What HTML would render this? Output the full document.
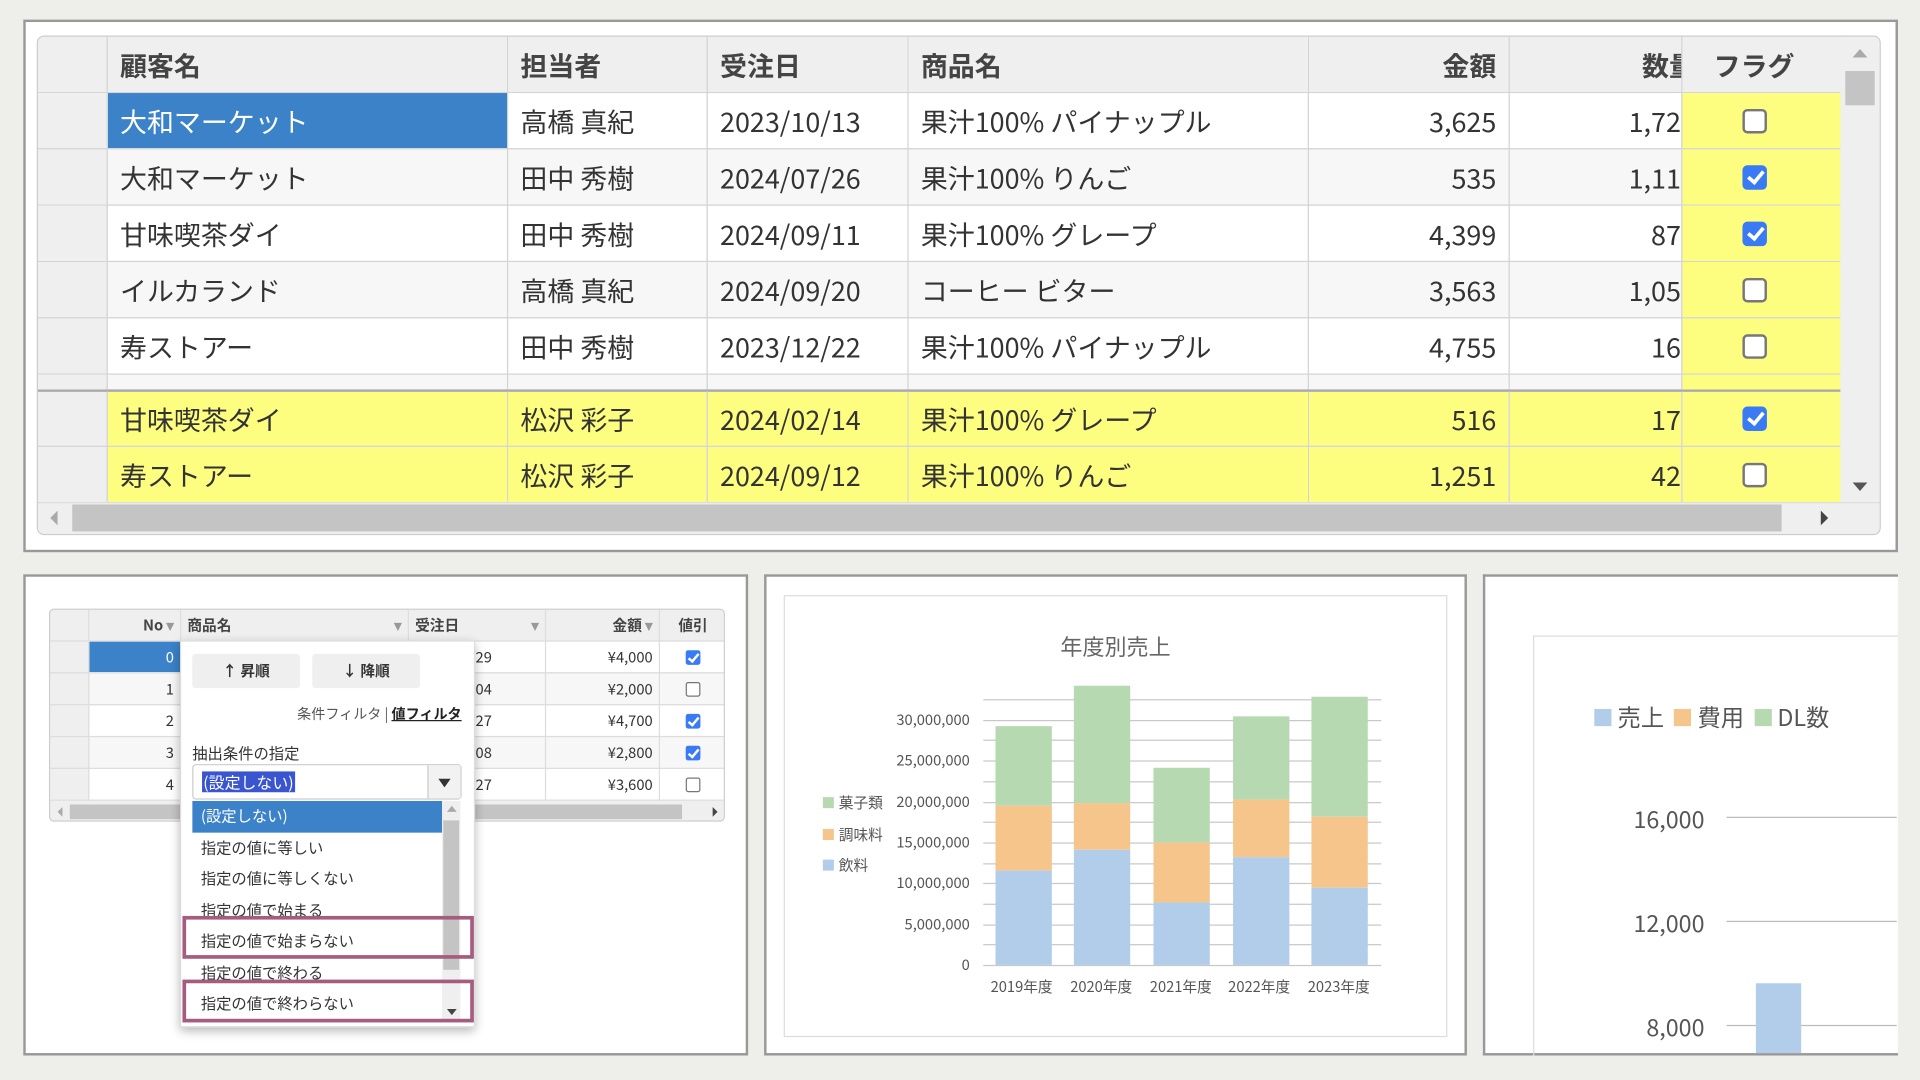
<!DOCTYPE html>
<html><head><meta charset="utf-8">
<style>
*{box-sizing:border-box;margin:0;padding:0}
body{width:1920px;height:1080px;overflow:hidden;background:#eeeeeb;font-family:"Noto Sans CJK JP","Liberation Sans",sans-serif;color:#333}
#s{position:absolute;left:0;top:0;width:1568px;height:882px;transform:scale(1.22449);transform-origin:0 0}
.a{position:absolute}
.panel{position:absolute;background:#fff;border:2px solid #999}
table{border-collapse:collapse;table-layout:fixed}
.tg td{border:1px solid #d4d4d4;height:46px;font-size:22px;line-height:26px;padding:0 10px;white-space:nowrap;overflow:hidden;position:relative}
.tg tr.h td{background:#efefef;font-weight:700;color:#444}
.tg td.rh{background:#efefef}
.tg tr.p td{height:13px;font-size:0;line-height:0;padding:0}
.r{text-align:right}
.y{background:#fdfd80}
.cut span{position:absolute;right:-12px;top:50%;transform:translateY(-50%)}
.cc{text-align:center;padding-right:22px!important}
.cb{display:inline-block;width:20px;height:20px;border:2px solid #777;border-radius:4px;background:#fff;vertical-align:middle;position:relative;top:-3px}
.cb.on{background:#3a7bf5;border-color:#3a7bf5}
.cb.on:after{content:"";position:absolute;left:5px;top:0px;width:5px;height:10px;border:solid #fff;border-width:0 3px 3px 0;transform:rotate(40deg)}
.sg td{border:1px solid #ddd;height:26px;font-size:12px;line-height:14px;padding:0 5px;white-space:nowrap;overflow:hidden}
.sg tr.h td{background:#efefef;font-weight:700;color:#444}
.scb{display:inline-block;width:12px;height:12px;border:1px solid #777;border-radius:2px;background:#fff;vertical-align:middle;position:relative}
.scb.on{background:#3a7bf5;border-color:#3a7bf5}
.scb.on:after{content:"";position:absolute;left:3px;top:0;width:3px;height:7px;border:solid #fff;border-width:0 2px 2px 0;transform:rotate(40deg)}
.li{position:absolute;left:0;width:204px;height:25.5px;font-size:12.5px;line-height:24px;padding-left:7px}
.yl{position:absolute;font-size:12px;color:#555;text-align:right;width:90px}
.gl{position:absolute;height:1px;background:#c8c8c8}
.bar{position:absolute;width:46px}
</style></head><body><div id="s">

<div class="panel" style="left:19px;top:16px;width:1531px;height:435px"></div>
<div class="a" style="left:30px;top:29px;width:1506px;height:408px;border:1px solid #ccc;border-radius:6px;background:#efefef;overflow:hidden">
<table class="tg" style="position:absolute;left:-1px;top:-1px;width:1473px">
<colgroup><col style="width:57px"><col style="width:327px"><col style="width:163px"><col style="width:164px"><col style="width:327px"><col style="width:164px"><col style="width:141px"><col style="width:130px"></colgroup>
<tr class="h"><td></td><td>顧客名</td><td>担当者</td><td>受注日</td><td>商品名</td><td class="r">金額</td><td class="cut"><span>数量</span></td><td class="cc">フラグ</td></tr>
<tr style="background:#fff"><td class="rh"></td><td style="background:#3b82c8;color:#fff">大和マーケット</td><td>高橋 真紀</td><td>2023/10/13</td><td>果汁100% パイナップル</td><td class="r">3,625</td><td class="cut"><span>1,720</span></td><td class="y cc"><i class="cb"></i></td></tr>
<tr style="background:#f7f7f7"><td class="rh"></td><td>大和マーケット</td><td>田中 秀樹</td><td>2024/07/26</td><td>果汁100% りんご</td><td class="r">535</td><td class="cut"><span>1,110</span></td><td class="y cc"><i class="cb on"></i></td></tr>
<tr style="background:#fff"><td class="rh"></td><td>甘味喫茶ダイ</td><td>田中 秀樹</td><td>2024/09/11</td><td>果汁100% グレープ</td><td class="r">4,399</td><td class="cut"><span>870</span></td><td class="y cc"><i class="cb on"></i></td></tr>
<tr style="background:#f7f7f7"><td class="rh"></td><td>イルカランド</td><td>高橋 真紀</td><td>2024/09/20</td><td>コーヒー ビター</td><td class="r">3,563</td><td class="cut"><span>1,050</span></td><td class="y cc"><i class="cb"></i></td></tr>
<tr style="background:#fff"><td class="rh"></td><td>寿ストアー</td><td>田中 秀樹</td><td>2023/12/22</td><td>果汁100% パイナップル</td><td class="r">4,755</td><td class="cut"><span>160</span></td><td class="y cc"><i class="cb"></i></td></tr>
<tr class="p" style="background:#f7f7f7"><td class="rh"></td><td></td><td></td><td></td><td></td><td></td><td></td><td class="y"></td></tr>
<tr><td class="rh" style="border-top:2px solid #aaa;height:45px"></td><td class="y" style="border-top:2px solid #aaa">甘味喫茶ダイ</td><td class="y" style="border-top:2px solid #aaa">松沢 彩子</td><td class="y" style="border-top:2px solid #aaa">2024/02/14</td><td class="y" style="border-top:2px solid #aaa">果汁100% グレープ</td><td class="y r" style="border-top:2px solid #aaa">516</td><td class="y cut" style="border-top:2px solid #aaa"><span>170</span></td><td class="y cc" style="border-top:2px solid #aaa"><i class="cb on"></i></td></tr>
<tr><td class="rh" style="height:45px"></td><td class="y">寿ストアー</td><td class="y">松沢 彩子</td><td class="y">2024/09/12</td><td class="y">果汁100% りんご</td><td class="y r">1,251</td><td class="y cut"><span>420</span></td><td class="y cc"><i class="cb"></i></td></tr>
</table>
<div class="a" style="left:1472px;top:0;width:33px;height:380px;background:#efefef"></div>
<div class="a" style="left:1482px;top:10px;width:0;height:0;border:6px solid transparent;border-bottom:7px solid #aaa;border-top:0"></div>
<div class="a" style="left:1476px;top:28px;width:24px;height:28px;background:#c4c4c4"></div>
<div class="a" style="left:1482px;top:364px;width:0;height:0;border:6px solid transparent;border-top:7px solid #555;border-bottom:0"></div>
<div class="a" style="left:0;top:380px;width:1506px;height:28px;background:#efefef;border-top:1px solid #ddd"></div>
<div class="a" style="left:28px;top:382px;width:1396px;height:22px;background:#c4c4c4"></div>
<div class="a" style="left:10px;top:387px;border:6px solid transparent;border-right:6px solid #aaa;border-left:0"></div>
<div class="a" style="left:1456px;top:387px;border:6px solid transparent;border-left:6px solid #444;border-right:0"></div>
</div>

<div class="panel" style="left:19px;top:469px;width:592px;height:393px"></div>
<div class="a" style="left:40px;top:497px;width:552px;height:174px;border:1px solid #ccc;border-radius:4px;background:#efefef;overflow:hidden">
<table class="sg" style="position:absolute;left:-1px;top:-1px;width:553px">
<colgroup><col style="width:32px"><col style="width:75px"><col style="width:186px"><col style="width:112px"><col style="width:93px"><col style="width:55px"></colgroup>
<tr class="h"><td></td><td class="r">No <span style="color:#999">▾</span></td><td>商品名<span style="float:right;color:#999">▾</span></td><td>受注日<span style="float:right;color:#999">▾</span></td><td class="r">金額 <span style="color:#999">▾</span></td><td style="text-align:center">値引</td></tr>
<tr style="background:#fff"><td style="background:#efefef"></td><td class="r" style="background:#3b82c8;color:#fff">0</td><td></td><td>2023/01/29</td><td class="r">¥4,000</td><td style="text-align:center"><i class="scb on"></i></td></tr>
<tr style="background:#f7f7f7"><td style="background:#efefef"></td><td class="r">1</td><td></td><td>2023/02/04</td><td class="r">¥2,000</td><td style="text-align:center"><i class="scb"></i></td></tr>
<tr style="background:#fff"><td style="background:#efefef"></td><td class="r">2</td><td></td><td>2023/03/27</td><td class="r">¥4,700</td><td style="text-align:center"><i class="scb on"></i></td></tr>
<tr style="background:#f7f7f7"><td style="background:#efefef"></td><td class="r">3</td><td></td><td>2023/04/08</td><td class="r">¥2,800</td><td style="text-align:center"><i class="scb on"></i></td></tr>
<tr style="background:#fff"><td style="background:#efefef"></td><td class="r">4</td><td></td><td>2023/05/27</td><td class="r">¥3,600</td><td style="text-align:center"><i class="scb"></i></td></tr>
</table>
<div class="a" style="left:0;top:156px;width:552px;height:18px;background:#efefef"></div>
<div class="a" style="left:16px;top:159px;width:500px;height:12px;background:#c4c4c4"></div>
<div class="a" style="left:6px;top:161px;border:4px solid transparent;border-right:4px solid #aaa;border-left:0"></div>
<div class="a" style="left:541px;top:161px;border:4px solid transparent;border-left:4px solid #444;border-right:0"></div>
</div>
<div class="a" style="left:147px;top:523px;width:241px;height:316px;background:#fff;box-shadow:0 3px 8px rgba(0,0,0,.3);border:1px solid #ddd">
<div class="a" style="left:9px;top:10px;width:88px;height:28px;background:#efefef;border-radius:3px;font-size:12px;font-weight:700;text-align:center;line-height:28px">↑ 昇順</div>
<div class="a" style="left:107px;top:10px;width:88px;height:28px;background:#efefef;border-radius:3px;font-size:12px;font-weight:700;text-align:center;line-height:28px">↓ 降順</div>
<div class="a" style="right:10px;top:51px;font-size:11.5px;color:#555">条件フィルタ | <span style="color:#222;text-decoration:underline;font-weight:700">値フィルタ</span></div>
<div class="a" style="left:9px;top:81px;font-size:12.5px">抽出条件の指定</div>
<div class="a" style="left:9px;top:100px;width:220px;height:29px;border:1px solid #ccc;border-radius:3px;background:#fff">
<span class="a" style="left:7px;top:5px;background:#3a55d0;color:#fff;font-size:13px;line-height:17px;padding:0 1px">(設定しない)</span>
<div class="a" style="right:0;top:0;width:27px;height:27px;border-left:1px solid #ccc;background:#f2f2f2"></div>
<div class="a" style="right:8px;top:11px;border:5px solid transparent;border-top:7px solid #333;border-bottom:0"></div>
</div>
<div class="a" style="left:9px;top:130px;width:222px;height:181px;background:#fff;overflow:hidden">
<div class="li" style="top:0;background:#3b82c8;color:#fff">(設定しない)</div>
<div class="li" style="top:25.5px">指定の値に等しい</div>
<div class="li" style="top:51px">指定の値に等しくない</div>
<div class="li" style="top:76.5px">指定の値で始まる</div>
<div class="li" style="top:102px">指定の値で始まらない</div>
<div class="li" style="top:127.5px">指定の値で終わる</div>
<div class="li" style="top:153px">指定の値で終わらない</div>
<div class="a" style="left:204px;top:0;width:15px;height:181px;background:#efefef"></div>
<div class="a" style="left:205px;top:16px;width:13px;height:122px;background:#c4c4c4"></div>
<div class="a" style="left:208px;top:4px;border:4px solid transparent;border-bottom:5px solid #aaa;border-top:0"></div>
<div class="a" style="left:208px;top:170px;border:4px solid transparent;border-top:5px solid #444;border-bottom:0"></div>
</div>
</div>
<div class="a" style="left:149px;top:748px;width:238px;height:35px;border:3px solid #a55c7e"></div>
<div class="a" style="left:149px;top:800px;width:238px;height:35px;border:3px solid #a55c7e"></div>

<div class="panel" style="left:624px;top:469px;width:574px;height:393px"></div>
<div class="a" style="left:640px;top:486px;width:542px;height:361px;border:1px solid #ddd"></div>
<div class="a" style="left:811px;top:515px;width:200px;text-align:center;font-size:18px;color:#666">年度別売上</div>
<div class="gl" style="left:803px;top:571px;width:325px"></div>
<div class="gl" style="left:803px;top:588px;width:325px"></div>
<div class="gl" style="left:803px;top:604px;width:325px"></div>
<div class="gl" style="left:803px;top:621px;width:325px"></div>
<div class="gl" style="left:803px;top:638px;width:325px"></div>
<div class="gl" style="left:803px;top:655px;width:325px"></div>
<div class="gl" style="left:803px;top:671px;width:325px"></div>
<div class="gl" style="left:803px;top:688px;width:325px"></div>
<div class="gl" style="left:803px;top:705px;width:325px"></div>
<div class="gl" style="left:803px;top:721px;width:325px"></div>
<div class="gl" style="left:803px;top:738px;width:325px"></div>
<div class="gl" style="left:803px;top:755px;width:325px"></div>
<div class="gl" style="left:803px;top:771px;width:325px"></div>
<div class="gl" style="left:803px;top:788px;width:325px"></div>
<div class="yl" style="left:702px;top:579px">30,000,000</div>
<div class="yl" style="left:702px;top:612px">25,000,000</div>
<div class="yl" style="left:702px;top:646px">20,000,000</div>
<div class="yl" style="left:702px;top:679px">15,000,000</div>
<div class="yl" style="left:702px;top:712px">10,000,000</div>
<div class="yl" style="left:702px;top:746px">5,000,000</div>
<div class="yl" style="left:702px;top:779px">0</div>
<div class="bar" style="left:813px;top:593px;height:65px;background:#b7d9b2"></div>
<div class="bar" style="left:813px;top:658px;height:53px;background:#f5c58c"></div>
<div class="bar" style="left:813px;top:711px;height:77px;background:#b2cdea"></div>
<div class="bar" style="left:877px;top:560px;height:96px;background:#b7d9b2"></div>
<div class="bar" style="left:877px;top:656px;height:38px;background:#f5c58c"></div>
<div class="bar" style="left:877px;top:694px;height:94px;background:#b2cdea"></div>
<div class="bar" style="left:942px;top:627px;height:61px;background:#b7d9b2"></div>
<div class="bar" style="left:942px;top:688px;height:49px;background:#f5c58c"></div>
<div class="bar" style="left:942px;top:737px;height:51px;background:#b2cdea"></div>
<div class="bar" style="left:1007px;top:585px;height:68px;background:#b7d9b2"></div>
<div class="bar" style="left:1007px;top:653px;height:47px;background:#f5c58c"></div>
<div class="bar" style="left:1007px;top:700px;height:88px;background:#b2cdea"></div>
<div class="bar" style="left:1071px;top:569px;height:98px;background:#b7d9b2"></div>
<div class="bar" style="left:1071px;top:667px;height:58px;background:#f5c58c"></div>
<div class="bar" style="left:1071px;top:725px;height:63px;background:#b2cdea"></div>
<div class="a" style="left:803px;top:797px;width:325px;font-size:12px;color:#555">
<span class="a" style="left:6px">2019年度</span><span class="a" style="left:71px">2020年度</span><span class="a" style="left:136px">2021年度</span><span class="a" style="left:200px">2022年度</span><span class="a" style="left:265px">2023年度</span></div>
<div class="a" style="left:672px;top:643px;font-size:12px;color:#555;line-height:25.5px">
<div><i style="display:inline-block;width:9px;height:9px;background:#b7d9b2;margin-right:4px"></i>菓子類</div>
<div><i style="display:inline-block;width:9px;height:9px;background:#f5c58c;margin-right:4px"></i>調味料</div>
<div><i style="display:inline-block;width:9px;height:9px;background:#b2cdea;margin-right:4px"></i>飲料</div>
</div>

<div class="panel" style="left:1211px;top:469px;width:339px;height:393px;border-right:none"></div>
<div class="a" style="left:1252px;top:519px;width:298px;height:343px;border:1px solid #ddd;border-right:none;border-bottom:none"></div>
<div class="a" style="left:1302px;top:572px;font-size:19px;color:#555;white-space:nowrap">
<i style="display:inline-block;width:14px;height:14px;background:#b2cdea;margin-right:5px"></i>売上 <i style="display:inline-block;width:14px;height:14px;background:#f5c58c;margin:0 5px 0 4px"></i>費用 <i style="display:inline-block;width:14px;height:14px;background:#b7d9b2;margin:0 5px 0 4px"></i>DL数</div>
<div class="a" style="left:1300px;top:655px;width:92px;text-align:right;font-size:19px;color:#555">16,000</div>
<div class="a" style="left:1300px;top:740px;width:92px;text-align:right;font-size:19px;color:#555">12,000</div>
<div class="a" style="left:1300px;top:825px;width:92px;text-align:right;font-size:19px;color:#555">8,000</div>
<div class="gl" style="left:1410px;top:667px;width:139px;background:#bbb"></div>
<div class="gl" style="left:1410px;top:752px;width:139px;background:#bbb"></div>
<div class="gl" style="left:1410px;top:837px;width:139px;background:#bbb"></div>
<div class="a" style="left:1434px;top:803px;width:37px;height:57px;background:#b2cdea"></div>

</div></body></html>
